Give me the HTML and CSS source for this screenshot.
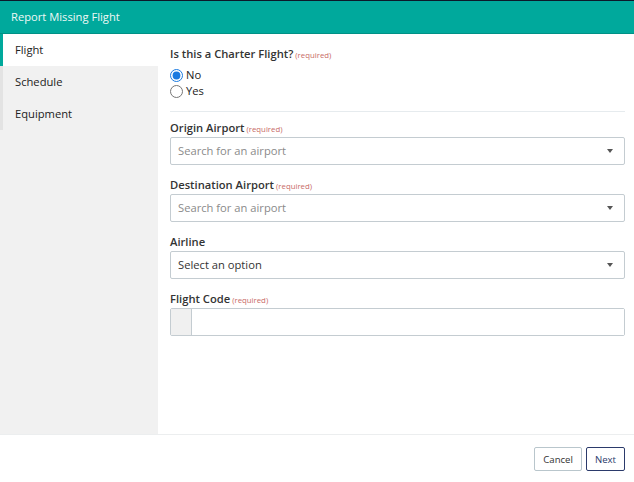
FILE: index.html
```html
<!DOCTYPE html>
<html lang="en">
<head>
    <meta charset="UTF-8">
    <meta name="viewport" content="width=device-width, initial-scale=1.0">
    <title>Report Missing Flight</title>
    <link rel="stylesheet" href="styles.css">
</head>
<body>
    <div class="header">Report Missing Flight</div>

    <div class="main">
        <ul class="steps">
            <li class="active">Flight</li>
            <li>Schedule</li>
            <li>Equipment</li>
        </ul>

        <form class="content" id="flightForm">
            <div class="field">
                <label class="title">Is this a Charter Flight?<span class="req">(required)</span></label>
                <label class="radio"><input type="radio" name="charter" value="no" checked> No</label>
                <label class="radio"><input type="radio" name="charter" value="yes"> Yes</label>
            </div>

            <hr class="divider">

            <div class="form-group">
                <label class="title">Origin Airport<span class="req">(required)</span></label>
                <div class="select placeholder">Search for an airport<span class="caret"></span></div>
            </div>

            <div class="form-group">
                <label class="title">Destination Airport<span class="req">(required)</span></label>
                <div class="select placeholder">Search for an airport<span class="caret"></span></div>
            </div>

            <div class="form-group">
                <label class="title">Airline</label>
                <div class="select">Select an option<span class="caret"></span></div>
            </div>

            <div class="form-group">
                <label class="title" for="code">Flight Code<span class="req">(required)</span></label>
                <div class="input-group">
                    <span class="addon"></span>
                    <input type="text" id="code" name="code">
                </div>
            </div>
        </form>
    </div>

    <div class="footer">
        <button type="button" class="btn">Cancel</button>
        <button type="button" class="btn primary">Next</button>
    </div>
</body>
</html>
```

FILE: styles.css
```css
body {
    margin: 0;
    font-family: 'Open Sans', 'Noto Sans', sans-serif;
    font-size: 11.2px;
    color: #333;
    background: #fff;
}
.header {
    height: 32px;
    line-height: 32px;
    padding-left: 11px;
    background: #00a99c;
    border-top: 1px solid #0c1a2b;
    border-bottom: 1px solid #009186;
    color: #eef8f6;
}
.main { display: flex; height: 400px; }
.steps {
    list-style: none;
    margin: 0;
    padding: 0;
    width: 158px;
    flex-shrink: 0;
    background: #f1f1f1;
}
.steps li {
    height: 32px;
    line-height: 32px;
    padding-left: 12px;
    border-left: 3px solid #e3e3e3;
    color: #222;
}
.steps li.active { background: #fff; border-left-color: #00a99c; }
.content { flex: 1; padding: 12px 9px 0 12px; }
.title {
    display: block;
    height: 16px;
    line-height: 16px;
    font-weight: 600;
    color: #333;
    margin-bottom: 1px;
}
.field .title { margin-bottom: 5px; }
.req { font-size: 7.8px; font-weight: 400; color: #c86a66; margin-left: 2px; line-height: 0; }
.radio { display: flex; align-items: center; height: 16px; line-height: 16px; color: #222; }
.radio input { margin: 0 3px 0 0; width: 13px; height: 13px; accent-color: #1a7ae0; }
.divider { border: 0; border-top: 1px solid #e6ebee; margin: 12px 0 8px; }
.form-group { margin-bottom: 12px; }
.select {
    position: relative;
    height: 26px;
    line-height: 26px;
    padding-left: 7px;
    border: 1px solid #c4ccd1;
    border-radius: 2px;
    color: #333;
}
.select.placeholder { color: #8a8a8a; }
.caret {
    position: absolute;
    right: 11px;
    top: 11px;
    border-left: 3px solid transparent;
    border-right: 3px solid transparent;
    border-top: 4px solid #555;
}
.input-group {
    display: flex;
    height: 26px;
    border: 1px solid #c4ccd1;
    border-radius: 2px;
}
.addon { width: 20px; background: #f0f0f0; border-right: 1px solid #c4ccd1; }
.input-group input { flex: 1; border: 0; outline: none; padding: 0 8px; font: inherit; }
.footer {
    display: flex;
    justify-content: flex-end;
    gap: 4px;
    height: 47px;
    padding: 12px 9px 0 0;
    box-sizing: border-box;
    border-top: 1px solid #eceeef;
}
.btn {
    height: 24px;
    padding: 0 8px;
    background: #fff;
    border: 1px solid #b9c6cc;
    border-radius: 2px;
    font: inherit;
    font-size: 9.6px;
    color: #333;
    cursor: pointer;
}
.btn.primary { border-color: #2b3a6b; color: #2b3a6b; }
```
